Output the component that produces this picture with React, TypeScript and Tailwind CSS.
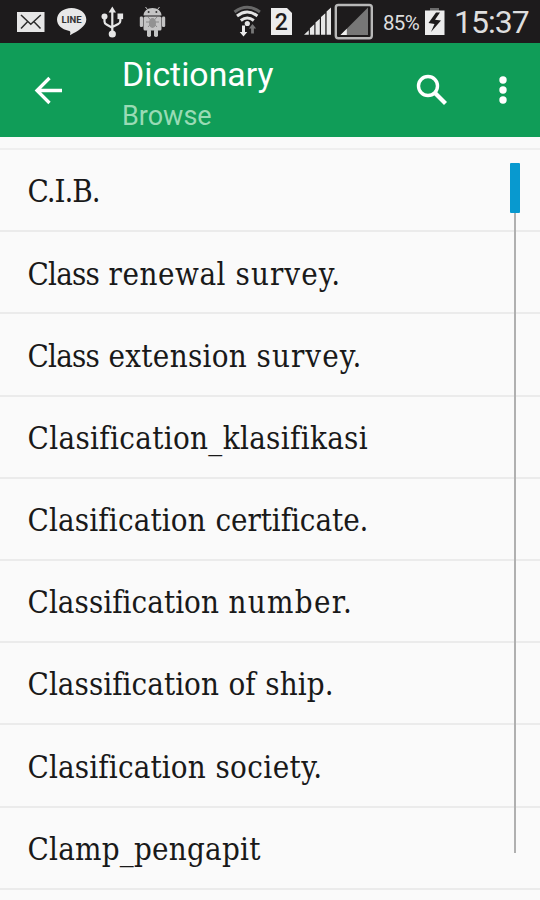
import { ReactNode } from "react";

// each word carries its own letter spacing
const entries = [
  [["C.I.B.", "tracking-[-1.05px]"]],
  [["Class", "tracking-[-0.8px]"], ["renewal", "tracking-[0.55px]"], ["survey.", "tracking-[1.05px]"]],
  [["Class", "tracking-[-0.8px]"], ["extension", "tracking-[0.3px]"], ["survey.", "tracking-[1.05px]"]],
  [["Clasification_klasifikasi", "tracking-[0.34px]"]],
  [["Clasification", "tracking-[0.15px]"], ["certificate.", "tracking-[-0.05px]"]],
  [["Classification", "tracking-[0.05px]"], ["number.", "tracking-[1.3px]"]],
  [["Classification", "tracking-[0.05px]"], ["of", "tracking-[0.1px]"], ["ship.", "tracking-[0.1px]"]],
  [["Clasification", "tracking-[0.15px]"], ["society.", "tracking-[0.4px]"]],
  [["Clamp_pengapit", "tracking-[0.23px]"]],
];

function IconButton({ label, className, children }: { label: string; className: string; children: ReactNode }) {
  return (
    <button aria-label={label} className={`shrink-0 ${className}`}>
      {children}
    </button>
  );
}

function StatusBar() {
  return (
    <div className="flex h-[43px] shrink-0 items-start bg-[#1d1b1c] text-[#dedede]">
      <svg width="228" height="43" viewBox="0 0 228 43" className="shrink-0">
        {/* mail */}
        <rect x="17" y="12" width="27.5" height="20" fill="#e6e6e6" />
        <path d="M21 15l9.8 9.2 10-9.2M21 28.5l6.5-6.8M40.5 28.5l-6.5-6.8" fill="none" stroke="#2b2b2b" strokeWidth="1.5" />
        {/* chat bubble */}
        <path d="M71.5 8C63.3 8 57 13 57 19.6c0 5.6 4.8 10 11.5 11.2 1.5.3 2 .9 1.8 2.2l-.3 2.2c8-3.8 16.3-9 16.3-15.6C86.3 13 79.7 8 71.5 8z" fill="#e8e8e8" />
        <text x="61.5" y="23.3" fontSize="9.8" fontWeight="700" textLength="20" lengthAdjust="spacingAndGlyphs" fill="#333" fontFamily="Roboto, sans-serif">LINE</text>
        {/* usb */}
        <g stroke="#e6e6e6" strokeWidth="2.2" fill="none">
          <path d="M112.3 11v23M104.5 18v3.5q0 2 2 3l5.8 3.2M120.3 18v3q0 2-2 3l-6 3" />
        </g>
        <path d="M112.3 6.5l3.7 6h-7.4z" fill="#e6e6e6" />
        <circle cx="104.5" cy="16.5" r="3" fill="#e6e6e6" />
        <rect x="117.5" y="13.5" width="5.6" height="5.6" fill="#e6e6e6" />
        <circle cx="112.3" cy="34" r="3.6" fill="#e6e6e6" />
        {/* debugging robot */}
        <g fill="#c4c4c4">
          <path d="M143.5 15.5c0-4.5 4-7.5 9-7.5s9 3 9 7.5z" />
          <path d="M147.5 9.5l-2-2.5M157.5 9.5l2-2.5" stroke="#c4c4c4" strokeWidth="1" />
          <rect x="143.5" y="16.5" width="18" height="14" rx="1.5" />
          <rect x="139.8" y="16.5" width="3.2" height="10.5" rx="1.3" />
          <rect x="162" y="16.5" width="3.2" height="10.5" rx="1.3" />
          <rect x="147" y="29" width="4" height="8" rx="1.8" />
          <rect x="154" y="29" width="4" height="8" rx="1.8" />
        </g>
        <circle cx="148.6" cy="12" r="1" fill="#333" />
        <circle cx="156.4" cy="12" r="1" fill="#333" />
        <path d="M148 17l9 10M157 17l-9 10M146 22h13" stroke="#8a8a8a" strokeWidth="1" />
        <ellipse cx="152.5" cy="23" rx="3.5" ry="5" fill="#929292" />
      </svg>
      <svg width="147" height="43" viewBox="228 0 147 43" className="shrink-0">
        {/* wifi with traffic arrows */}
        <g fill="none" strokeWidth="3">
          <path d="M234.5 12q12.7-9.5 25.4 0" stroke="#686868" />
          <path d="M237 16q10.2-8 20.4 0M240.8 20.5q6.5-5 13 0" stroke="#e4e4e4" />
        </g>
        <circle cx="247.3" cy="23.5" r="2.6" fill="#e4e4e4" />
        <path d="M243.5 36.5l-3.8-4.5h2.3v-6.5h3v6.5h2.3z" fill="#e9e9e9" />
        <path d="M252.5 24l3.6 4.5h-2.2v5h-2.8v-5h-2.2z" fill="#777" />
        {/* sim slot */}
        <path d="M271 8h16l5 5v22h-21z" fill="#ececec" />
        <text x="274.8" y="30" fontSize="23" fontWeight="500" fill="#1d1b1c" fontFamily="Roboto, sans-serif">2</text>
        {/* signal bars */}
        <path d="M304 34.8l4.8-4.6v4.6zM309.9 34.8v-6.5l4.4-4v10.5zM315.5 34.8V22.5l4.3-3.8v16.1zM321 34.8V17l4.3-3.7v21.5zM326.6 34.8V11.5l4.4-4v27.3z" fill="#e7e7e7" />
        <rect x="335.8" y="5" width="36" height="33.3" rx="2.5" fill="none" stroke="#b8b8b8" strokeWidth="2.4" />
        <path d="M340.5 35l27.5-27.5V35z" fill="#777" />
        <path d="M340.5 35l6.3-6.3V35z" fill="#efefef" />
      </svg>
      <span className="mt-[8px] ml-[8px] w-[37px] shrink-0 whitespace-nowrap font-[Roboto,sans-serif] text-[20.5px] leading-[30px] tracking-[-0.7px]">85%</span>
      <svg width="22" height="43" viewBox="0 0 22 43" className="ml-[4px] shrink-0">
        <path d="M6 11V8h9v3" fill="#6b6b6b" />
        <rect x="1" y="10.5" width="19.5" height="24.5" fill="#ececec" />
        <path d="M12 12.5L4.5 23l6 1-3.5 8L17 20.5l-6-.8 5-7.2z" fill="#1d1b1c" />
      </svg>
      <span className="ml-[8px] mt-[4px] whitespace-nowrap font-[Roboto,sans-serif] text-[32px] leading-[36px] tracking-[-1px]">15:37</span>
    </div>
  );
}

function Toolbar() {
  return (
    <header className="flex h-[94px] shrink-0 items-center bg-[#109d58] font-[Roboto,sans-serif] text-white">
      <IconButton label="Back" className="ml-[32px] w-[32px]">
        <svg width="32" height="32" viewBox="0 0 32 32" fill="none" stroke="white" strokeWidth="3.3">
          <path d="M30 16.5H4.5M17.5 4L5 16.5 17.5 29" />
        </svg>
      </IconButton>
      <div className="ml-[58px] flex-1 pt-[8px]">
        <h1 className="text-[33.8px] leading-[38px]">Dictionary</h1>
        <p className="mt-[6px] text-[27px] leading-[32px] text-[#99dbb5]">Browse</p>
      </div>
      <IconButton label="Search" className="w-[34px]">
        <svg width="34" height="34" viewBox="0 0 34 34" fill="none" stroke="white">
          <circle cx="13" cy="13" r="9.5" strokeWidth="3.4" />
          <path d="M20 20l10.5 10.5" strokeWidth="4.2" />
        </svg>
      </IconButton>
      <IconButton label="More options" className="mr-[29px] ml-[46px] w-[16px]">
        <svg width="16" height="32" viewBox="0 0 16 32" fill="white">
          <circle cx="8" cy="6" r="3.7" />
          <circle cx="8" cy="16" r="3.7" />
          <circle cx="8" cy="26" r="3.7" />
        </svg>
      </IconButton>
    </header>
  );
}

export default function App() {
  return (
    <div className="flex h-[900px] w-[540px] flex-col overflow-hidden bg-[#fafafa]">
      <StatusBar />
      <Toolbar />
      <main className="relative flex-1 pt-[11px]">
        <ul className="border-t-2 border-[#efefef]">
          {entries.map((words, i) => (
            <li key={i} className="flex h-[82.2px] items-center gap-[9.5px] border-b-2 border-[#ebebeb] pt-[3px] pl-[27.5px] font-['DejaVu_Serif_Condensed','DejaVu_Serif',serif] text-[31px] text-[#191919]">
              {words.map(([word, tracking]) => (
                <span key={word} className={tracking}>{word}</span>
              ))}
            </li>
          ))}
        </ul>
        {/* fast scroll track and thumb */}
        <div className="absolute top-[26px] right-[20px] flex h-[690px] w-[10px] justify-center">
          <div className="h-full w-[2px] bg-[#b0b0b0]" />
          <div className="absolute top-0 h-[50px] w-[10px] rounded-[1px] bg-[#0899cf]" />
        </div>
      </main>
    </div>
  );
}
